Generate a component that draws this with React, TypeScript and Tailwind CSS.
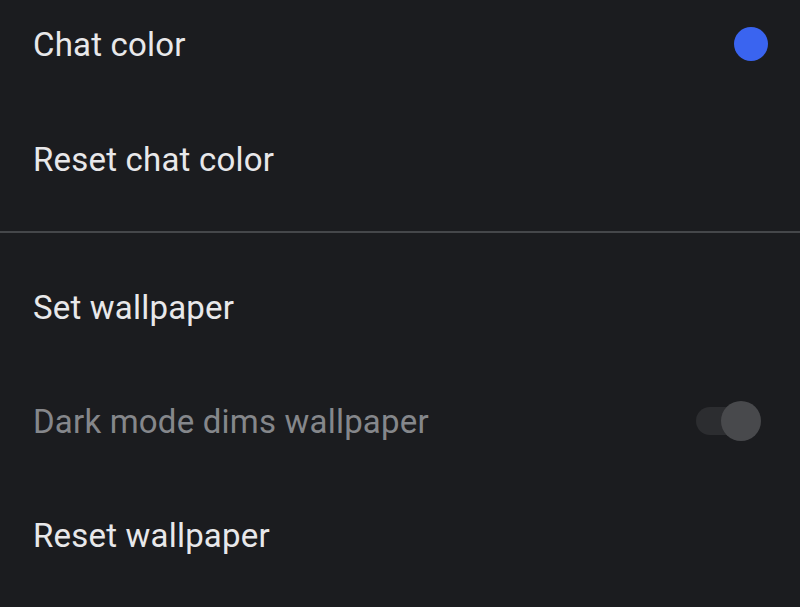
export default function App() {
  return (
    <div
      className="w-[800px] h-[607px] overflow-hidden bg-[#1b1c1f] text-[#e8e8ea]"
      style={{ fontFamily: "Roboto, 'Noto Sans', sans-serif" }}
    >
      <div className="flex h-[88px] items-center justify-between pl-[33px] pr-[32px]">
        <span className="text-[33px] leading-none tracking-[0.2px]">Chat color</span>
        <span className="block h-[34px] w-[34px] rounded-full bg-[#3a64f0]" />
      </div>
      <div className="mt-[14px] flex h-[114px] items-center pl-[33px]">
        <span className="text-[33px] leading-none tracking-[0.2px]">Reset chat color</span>
      </div>
      <div className="pt-[15px] pb-[17px]">
        <div className="h-[2px] bg-[#45474a]" />
      </div>
      <div className="flex h-[114px] items-center pl-[33px]">
        <span className="text-[33px] leading-none tracking-[0.2px]">Set wallpaper</span>
      </div>
      <div className="flex h-[114px] items-center justify-between pl-[33px] pr-[40px]">
        <span className="text-[33px] leading-none tracking-[0.2px] text-[#85878b]">
          Dark mode dims wallpaper
        </span>
        <div className="relative flex h-[28px] w-[64px] items-center rounded-full bg-[#2c2d30]">
          <span className="absolute right-[-1px] block h-[40px] w-[40px] rounded-full bg-[#48494c]" />
        </div>
      </div>
      <div className="flex h-[114px] items-center pl-[33px]">
        <span className="text-[33px] leading-none tracking-[0.2px]">Reset wallpaper</span>
      </div>
    </div>
  );
}
